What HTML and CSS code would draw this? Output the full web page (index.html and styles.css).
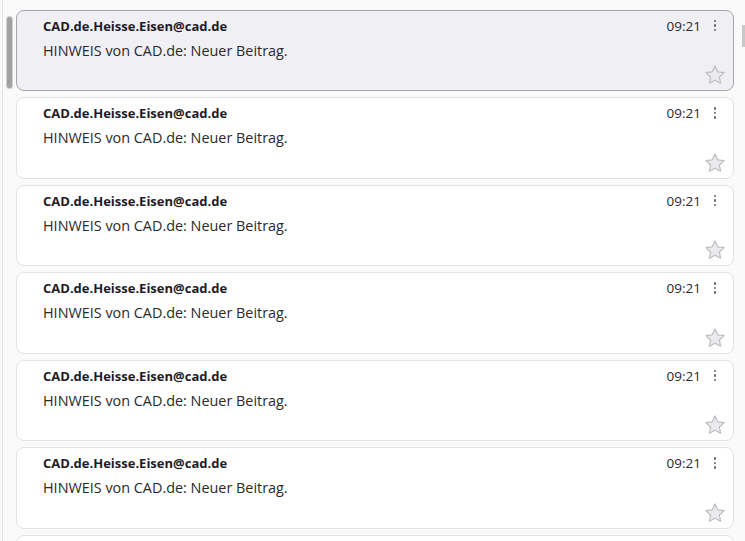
FILE: index.html
```html
<!DOCTYPE html>
<html>
<head>
<meta charset="utf-8">
<link rel="stylesheet" href="styles.css">
</head>
<body>
<div class="pane">
  <div class="thumb"></div>
  <div class="rthumb"></div>
  <ul class="list">
    <li class="card selected">
      <div class="main"><div class="from">CAD.de.Heisse.Eisen@cad.de</div><div class="subject">HINWEIS von CAD.de: Neuer Beitrag.</div></div>
      <div class="side"><div class="top"><span class="time">09:21</span><span class="kebab"><i></i><i></i><i></i></span></div>
      <svg class="star" viewBox="0 0 20 20"><path d="M10 1.8l2.5 5.3 5.8.7-4.3 4 1.1 5.7L10 14.7l-5.1 2.8 1.1-5.7-4.3-4 5.8-.7z"/></svg></div>
    </li>
    <li class="card">
      <div class="main"><div class="from">CAD.de.Heisse.Eisen@cad.de</div><div class="subject">HINWEIS von CAD.de: Neuer Beitrag.</div></div>
      <div class="side"><div class="top"><span class="time">09:21</span><span class="kebab"><i></i><i></i><i></i></span></div>
      <svg class="star" viewBox="0 0 20 20"><path d="M10 1.8l2.5 5.3 5.8.7-4.3 4 1.1 5.7L10 14.7l-5.1 2.8 1.1-5.7-4.3-4 5.8-.7z"/></svg></div>
    </li>
    <li class="card">
      <div class="main"><div class="from">CAD.de.Heisse.Eisen@cad.de</div><div class="subject">HINWEIS von CAD.de: Neuer Beitrag.</div></div>
      <div class="side"><div class="top"><span class="time">09:21</span><span class="kebab"><i></i><i></i><i></i></span></div>
      <svg class="star" viewBox="0 0 20 20"><path d="M10 1.8l2.5 5.3 5.8.7-4.3 4 1.1 5.7L10 14.7l-5.1 2.8 1.1-5.7-4.3-4 5.8-.7z"/></svg></div>
    </li>
    <li class="card">
      <div class="main"><div class="from">CAD.de.Heisse.Eisen@cad.de</div><div class="subject">HINWEIS von CAD.de: Neuer Beitrag.</div></div>
      <div class="side"><div class="top"><span class="time">09:21</span><span class="kebab"><i></i><i></i><i></i></span></div>
      <svg class="star" viewBox="0 0 20 20"><path d="M10 1.8l2.5 5.3 5.8.7-4.3 4 1.1 5.7L10 14.7l-5.1 2.8 1.1-5.7-4.3-4 5.8-.7z"/></svg></div>
    </li>
    <li class="card">
      <div class="main"><div class="from">CAD.de.Heisse.Eisen@cad.de</div><div class="subject">HINWEIS von CAD.de: Neuer Beitrag.</div></div>
      <div class="side"><div class="top"><span class="time">09:21</span><span class="kebab"><i></i><i></i><i></i></span></div>
      <svg class="star" viewBox="0 0 20 20"><path d="M10 1.8l2.5 5.3 5.8.7-4.3 4 1.1 5.7L10 14.7l-5.1 2.8 1.1-5.7-4.3-4 5.8-.7z"/></svg></div>
    </li>
    <li class="card">
      <div class="main"><div class="from">CAD.de.Heisse.Eisen@cad.de</div><div class="subject">HINWEIS von CAD.de: Neuer Beitrag.</div></div>
      <div class="side"><div class="top"><span class="time">09:21</span><span class="kebab"><i></i><i></i><i></i></span></div>
      <svg class="star" viewBox="0 0 20 20"><path d="M10 1.8l2.5 5.3 5.8.7-4.3 4 1.1 5.7L10 14.7l-5.1 2.8 1.1-5.7-4.3-4 5.8-.7z"/></svg></div>
    </li>
    <li class="card">
      <div class="main"><div class="from">CAD.de.Heisse.Eisen@cad.de</div><div class="subject">HINWEIS von CAD.de: Neuer Beitrag.</div></div>
      <div class="side"><div class="top"><span class="time">09:21</span><span class="kebab"><i></i><i></i><i></i></span></div>
      <svg class="star" viewBox="0 0 20 20"><path d="M10 1.8l2.5 5.3 5.8.7-4.3 4 1.1 5.7L10 14.7l-5.1 2.8 1.1-5.7-4.3-4 5.8-.7z"/></svg></div>
    </li>
  </ul>
</div>
</body>
</html>
```
FILE: styles.css
```css
html, body {
  margin: 0;
  padding: 0;
  background: #fafafa;
  overflow: hidden;
}
body {
  font-family: "Open Sans", "Noto Sans", sans-serif;
  width: 745px;
  height: 541px;
}
.pane {
  position: relative;
  height: 541px;
  margin-left: 2px;
  border-left: 1px solid #e3e3e3;
  box-sizing: border-box;
  overflow: hidden;
}
.thumb {
  position: absolute;
  left: 4px;
  top: 17px;
  width: 5px;
  height: 71px;
  border-radius: 3px;
  background: #a2a2a2;
  box-shadow: 0 0 0 1px #d0d0d0;
}
.rthumb {
  position: absolute;
  right: 0;
  top: 25px;
  width: 3px;
  height: 22px;
  background: #c8c8c8;
}
.list {
  list-style: none;
  margin: 0;
  padding: 9.5px 11px 0 13px;
  display: flex;
  flex-direction: column;
  gap: 6px;
}
.card {
  display: flex;
  flex: 0 0 81.5px;
  height: 81.5px;
  box-sizing: border-box;
  background: #fff;
  border: 1px solid #e2e2e2;
  border-radius: 8px;
  padding: 6px 14px 4px 26px;
}
.card.selected {
  background: #f0f0f4;
  border-color: #a6a6ab;
}
.main {
  flex: 1;
}
.from {
  font-weight: 700;
  font-size: 13px;
  color: #1c1c2b;
  line-height: 18px;
}
.subject {
  margin-top: 6px;
  font-size: 14.4px;
  color: #2a2a2a;
  line-height: 20px;
}
.side {
  display: flex;
  flex-direction: column;
  align-items: flex-end;
  justify-content: space-between;
}
.top {
  display: flex;
  align-items: center;
  height: 18px;
  gap: 10px;
}
.time {
  font-size: 13.5px;
  color: #2a2a2a;
}
.kebab {
  display: flex;
  flex-direction: column;
  gap: 2px;
  width: 8px;
  align-items: center;
}
.kebab i {
  display: block;
  width: 2.5px;
  height: 2.5px;
  border-radius: 50%;
  background: #666;
}
.star {
  width: 22px;
  height: 22px;
  margin-right: -7px;
}
.star path {
  fill: #ebebee;
  stroke: #bdbdc2;
  stroke-width: 1.1;
  stroke-linejoin: round;
}
```
